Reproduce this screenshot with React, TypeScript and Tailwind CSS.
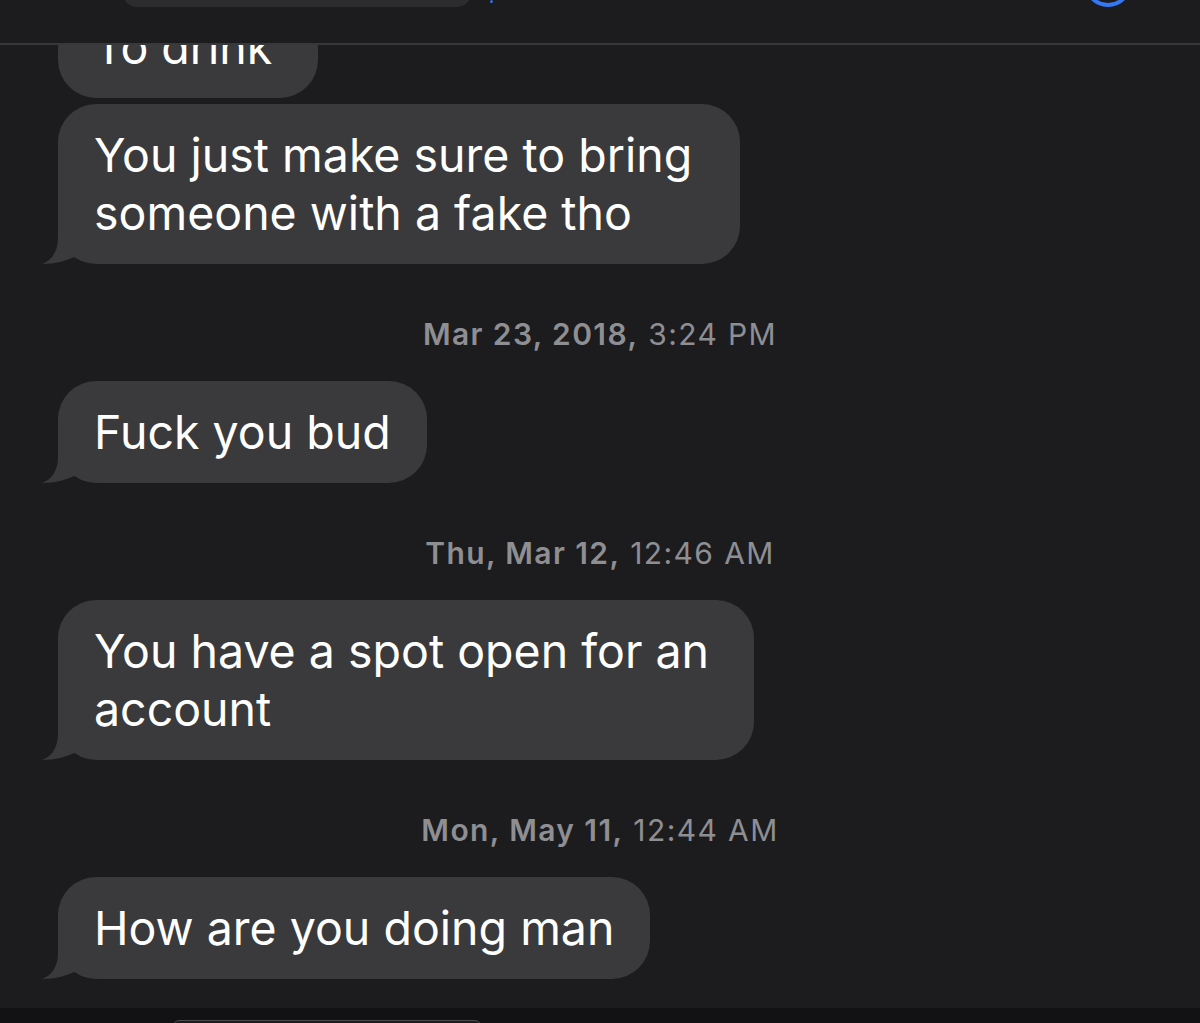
import React from "react";

type Msg =
  | { kind: "bubble"; lines: string[]; width?: string }
  | { kind: "time"; day: string; time: string };

const thread: Msg[] = [
  { kind: "bubble", lines: ["You just make sure to bring", "someone with a fake tho"], width: "w-[682px]" },
  { kind: "time", day: "Mar 23, 2018,", time: "3:24 PM" },
  { kind: "bubble", lines: ["Fuck you bud"] },
  { kind: "time", day: "Thu, Mar 12,", time: "12:46 AM" },
  { kind: "bubble", lines: ["You have a spot open for an", "account"], width: "w-[696px]" },
  { kind: "time", day: "Mon, May 11,", time: "12:44 AM" },
  { kind: "bubble", lines: ["How are you doing man"] },
];

const Tail = () => (
  <svg
    className="absolute bottom-0 left-[-16px]"
    width="60"
    height="44"
    viewBox="0 0 60 44"
  >
    <path
      d="M16 0 L16 18 C16 32 9 41 0 44 C12 44 26 41 38 34 C44 40 52 44 60 44 L60 0 Z"
      fill="#3a3a3c"
    />
  </svg>
);

const Bubble = ({
  lines,
  className = "w-fit",
  tail = true,
}: {
  lines: string[];
  className?: string;
  tail?: boolean;
}) => (
  <div className={`relative rounded-[38px] bg-[#3a3a3c] px-[36px] py-[22px] ${className}`}>
    {tail && <Tail />}
    <p className="relative whitespace-nowrap text-[46.5px] leading-[58px] text-white">
      {lines.map((l, i) => (
        <span key={i} className="block">
          {l}
        </span>
      ))}
    </p>
  </div>
);

const Stamp = ({ day, time }: { day: string; time: string }) => (
  <p className="mb-[29px] mt-[52px] h-[36px] text-center text-[30px] leading-[36px] tracking-[1.4px] text-[#8e8e93]">
    <span className="font-semibold">{day}</span> {time}
  </p>
);

export default function App() {
  return (
    <div
      className="flex h-[1023px] w-[1200px] flex-col overflow-hidden bg-[#1c1c1e]"
      style={{ fontFamily: "Inter, 'Liberation Sans', sans-serif" }}
    >
      <header className="relative h-[45px] shrink-0 border-b-2 border-[#38383a] bg-[#1c1c1e]">
        <div className="absolute left-[123px] top-[-40px] h-[47px] w-[348px] rounded-[14px] bg-[#2c2c2e]" />
        <div className="absolute left-[490px] top-0 h-[3px] w-[3px] rounded-full bg-[#2f6fe0]" />
        <svg className="absolute left-[1082px] top-[-40px]" width="52" height="50" viewBox="0 0 52 50">
          <circle cx="26" cy="23" r="22" fill="none" stroke="#3478f6" strokeWidth="4" />
        </svg>
      </header>

      <main className="flex flex-1 flex-col overflow-hidden pl-[58px]">
        <Bubble lines={["To drink"]} tail={false} className="mt-[-49px] mb-[6px] w-[260px]" />
        {thread.map((m, i) =>
          m.kind === "bubble" ? (
            <Bubble key={i} lines={m.lines} className={m.width ?? "w-fit"} />
          ) : (
            <div key={i} className="-ml-[58px]">
              <Stamp day={m.day} time={m.time} />
            </div>
          )
        )}
      </main>

      <footer className="relative h-[15px] shrink-0 bg-[#121214]">
        <div className="absolute left-[173px] top-[12px] h-[20px] w-[308px] rounded-t-[6px] border border-[#4a4a4c] bg-[#1c1c1e]" />
      </footer>
    </div>
  );
}
